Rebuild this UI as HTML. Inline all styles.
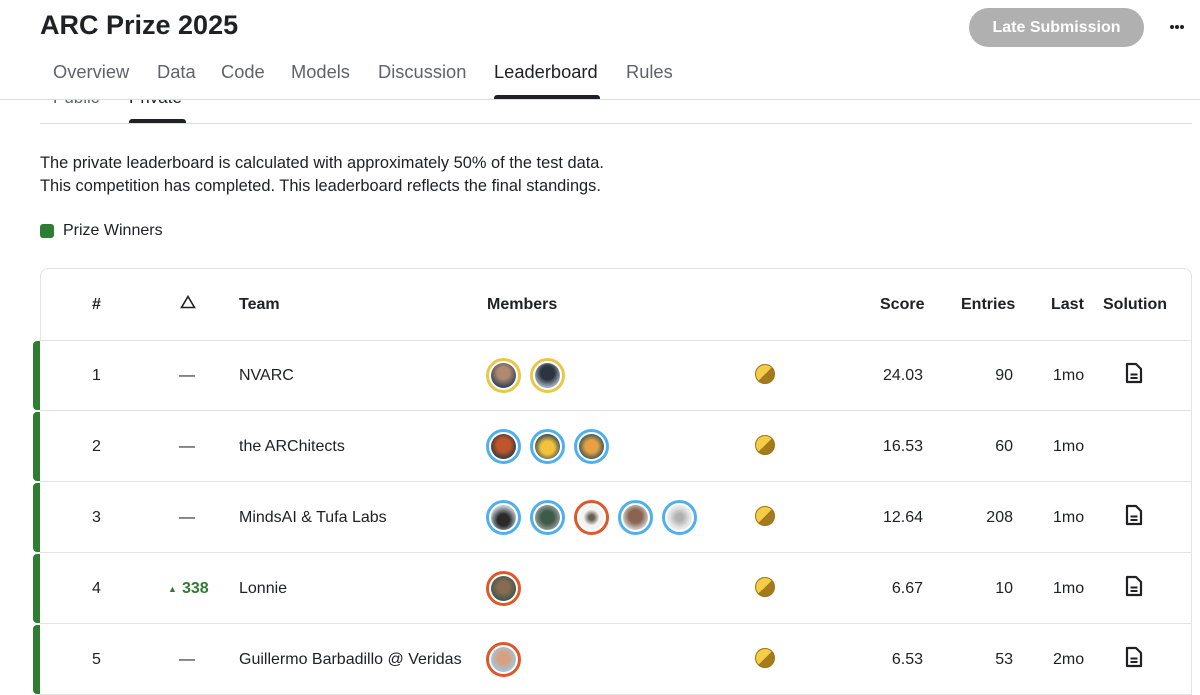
<!DOCTYPE html>
<html><head><meta charset="utf-8"><style>
*{margin:0;padding:0;box-sizing:border-box}
body{width:1200px;height:693px;overflow:hidden;background:#fff;font-family:"Liberation Sans",sans-serif;color:#202124;position:relative}
.a{position:absolute;white-space:nowrap}
.tab{position:absolute;top:61px;font-size:18.3px;color:#5f6368}
.row{position:absolute;left:40px;width:1152px;height:71px;border-bottom:1px solid #e3e3e3;border-right:1px solid #e3e3e3}
.bar{position:absolute;left:33px;width:7px;background:#2e7d32;border-radius:4px 0 0 4px}
.c{position:absolute;top:27px;font-size:16px;color:#202124}
.av{position:absolute;top:18px;width:35px;height:35px;border-radius:50%;border:3px solid #4fb0ee;padding:2px;background:#fff}
.av i{display:block;width:100%;height:100%;border-radius:50%}
.medal{position:absolute;left:715px;top:24px;width:20px;height:20px;border-radius:50%;background:linear-gradient(135deg,#f5cc4a 50%,#a57a1c 50%);border:1.5px solid #9b7414}
.doc{position:absolute;left:1084px;top:22px}
.h{position:absolute;top:296px;font-weight:bold;font-size:16px}
.dot{position:absolute;top:25px;width:4px;height:4px;border-radius:50%;background:#202124}
</style></head><body>
<div class="a" style="left:40px;top:10px;font-size:27px;font-weight:bold;color:#202124">ARC Prize 2025</div>
<div class="a" style="left:969px;top:8px;width:175px;height:39px;border-radius:20px;background:#b0b0b0;color:#fff;font-weight:bold;font-size:16px;text-align:center;line-height:39px">Late Submission</div>
<div class="dot" style="left:1170px"></div><div class="dot" style="left:1175px"></div><div class="dot" style="left:1180px"></div>
<div class="tab" style="left:53px">Overview</div>
<div class="tab" style="left:157px">Data</div>
<div class="tab" style="left:221px">Code</div>
<div class="tab" style="left:291px">Models</div>
<div class="tab" style="left:378px">Discussion</div>
<div class="tab" style="left:494px;color:#202124">Leaderboard</div>
<div class="tab" style="left:626px">Rules</div>
<div class="a" style="left:494px;top:95px;width:106px;height:5px;background:#202124;border-radius:3px 3px 0 0"></div>
<div class="a" style="left:0;top:99px;width:1200px;height:1px;background:#dadce0"></div>
<div class="a" style="left:0;top:100px;width:1200px;height:8px;overflow:hidden">
 <div class="a" style="left:53px;top:-12px;font-size:17px;color:#5f6368">Public</div>
 <div class="a" style="left:129px;top:-12px;font-size:17px;color:#202124">Private</div>
</div>
<div class="a" style="left:129px;top:119px;width:57px;height:5px;background:#202124;border-radius:3px 3px 0 0"></div>
<div class="a" style="left:40px;top:123px;width:1152px;height:1px;background:#dadce0"></div>
<div class="a" style="left:40px;top:152px;font-size:16.4px;line-height:23px;color:#202124">The private leaderboard is calculated with approximately 50% of the test data.<br>This competition has completed. This leaderboard reflects the final standings.</div>
<div class="a" style="left:40px;top:224px;width:14px;height:14px;border-radius:3px;background:#2e7d32"></div>
<div class="a" style="left:63px;top:222px;font-size:16px">Prize Winners</div>

<div class="a" style="left:40px;top:268px;width:1152px;height:73px;border:1px solid #e3e3e3;border-radius:8px 8px 0 0"></div>
<div class="h" style="left:92px">#</div>
<svg class="a" style="left:180px;top:295px" width="16" height="14" viewBox="0 0 16 14"><path d="M8 1.5 L14.5 12.5 H1.5 Z" fill="none" stroke="#202124" stroke-width="1.6"/></svg>
<div class="h" style="left:239px">Team</div>
<div class="h" style="left:487px">Members</div>
<div class="h" style="left:880px">Score</div>
<div class="h" style="left:961px">Entries</div>
<div class="h" style="left:1051px">Last</div>
<div class="h" style="left:1103px">Solution</div>

<div class="bar" style="top:341px;height:69px"></div>
<div class="bar" style="top:412px;height:69px"></div>
<div class="bar" style="top:483px;height:69px"></div>
<div class="bar" style="top:554px;height:69px"></div>
<div class="bar" style="top:625px;height:69px"></div>

<div class="row" style="top:340px">
 <div class="c" style="left:52px">1</div><div class="c" style="left:139px">—</div><div class="c" style="left:199px">NVARC</div>
 <div class="av" style="left:446px;border-color:#e8c84a"><i style="background:radial-gradient(circle at 50% 40%,#b08a70 30%,#3b4a5a 70%)"></i></div>
 <div class="av" style="left:490px;border-color:#e8c84a"><i style="background:radial-gradient(circle at 50% 40%,#2c3440 35%,#9aa8b5 70%)"></i></div>
 <div class="medal"></div>
 <div class="c" style="right:268px">24.03</div><div class="c" style="right:178px">90</div><div class="c" style="left:1013px">1mo</div>
 <svg class="doc" width="20" height="22" viewBox="0 0 20 22"><path d="M3 2h9l5 5v13H3z" fill="none" stroke="#202124" stroke-width="2.2" stroke-linejoin="round"/><path d="M6.5 12.5h7M6.5 16h7" stroke="#202124" stroke-width="2"/></svg>
</div>
<div class="row" style="top:411px">
 <div class="c" style="left:52px">2</div><div class="c" style="left:139px">—</div><div class="c" style="left:199px">the ARChitects</div>
 <div class="av" style="left:446px"><i style="background:radial-gradient(circle at 50% 45%,#c0552a 35%,#2a3a48 75%)"></i></div>
 <div class="av" style="left:490px"><i style="background:radial-gradient(circle at 50% 55%,#f2c23a 35%,#2f4a5a 75%)"></i></div>
 <div class="av" style="left:534px"><i style="background:radial-gradient(circle at 50% 50%,#e8a040 35%,#2e5560 75%)"></i></div>
 <div class="medal"></div>
 <div class="c" style="right:268px">16.53</div><div class="c" style="right:178px">60</div><div class="c" style="left:1013px">1mo</div>
</div>
<div class="row" style="top:482px">
 <div class="c" style="left:52px">3</div><div class="c" style="left:139px">—</div><div class="c" style="left:199px">MindsAI &amp; Tufa Labs</div>
 <div class="av" style="left:446px"><i style="background:radial-gradient(circle at 50% 60%,#2a2a2a 30%,#bfc8d0 70%)"></i></div>
 <div class="av" style="left:490px"><i style="background:radial-gradient(circle at 50% 50%,#3e5a48 35%,#9aa0a0 75%)"></i></div>
 <div class="av" style="left:534px;border-color:#e0582a"><i style="background:radial-gradient(circle at 50% 50%,#6a6050 15%,#f4f4f4 45%)"></i></div>
 <div class="av" style="left:578px"><i style="background:radial-gradient(circle at 50% 45%,#8a6450 35%,#d8d8d8 75%)"></i></div>
 <div class="av" style="left:622px"><i style="background:radial-gradient(circle at 50% 50%,#b0b0b0 20%,#e8e8e8 60%)"></i></div>
 <div class="medal"></div>
 <div class="c" style="right:268px">12.64</div><div class="c" style="right:178px">208</div><div class="c" style="left:1013px">1mo</div>
 <svg class="doc" width="20" height="22" viewBox="0 0 20 22"><path d="M3 2h9l5 5v13H3z" fill="none" stroke="#202124" stroke-width="2.2" stroke-linejoin="round"/><path d="M6.5 12.5h7M6.5 16h7" stroke="#202124" stroke-width="2"/></svg>
</div>
<div class="row" style="top:553px">
 <div class="c" style="left:52px">4</div>
 <div class="c" style="left:128px;font-size:9px;top:31px;color:#2e7d32">▲</div>
 <div class="c" style="left:142px;color:#2e7d32;font-weight:bold">338</div>
 <div class="c" style="left:199px">Lonnie</div>
 <div class="av" style="left:446px;border-color:#e0582a"><i style="background:radial-gradient(circle at 50% 45%,#8a6a50 30%,#3e5a4a 70%)"></i></div>
 <div class="medal"></div>
 <div class="c" style="right:268px">6.67</div><div class="c" style="right:178px">10</div><div class="c" style="left:1013px">1mo</div>
 <svg class="doc" width="20" height="22" viewBox="0 0 20 22"><path d="M3 2h9l5 5v13H3z" fill="none" stroke="#202124" stroke-width="2.2" stroke-linejoin="round"/><path d="M6.5 12.5h7M6.5 16h7" stroke="#202124" stroke-width="2"/></svg>
</div>
<div class="row" style="top:624px">
 <div class="c" style="left:52px">5</div><div class="c" style="left:139px">—</div><div class="c" style="left:199px">Guillermo Barbadillo @ Veridas</div>
 <div class="av" style="left:446px;border-color:#e0582a"><i style="background:radial-gradient(circle at 50% 45%,#d8a080 30%,#9cc8e0 70%)"></i></div>
 <div class="medal"></div>
 <div class="c" style="right:268px">6.53</div><div class="c" style="right:178px">53</div><div class="c" style="left:1013px">2mo</div>
 <svg class="doc" width="20" height="22" viewBox="0 0 20 22"><path d="M3 2h9l5 5v13H3z" fill="none" stroke="#202124" stroke-width="2.2" stroke-linejoin="round"/><path d="M6.5 12.5h7M6.5 16h7" stroke="#202124" stroke-width="2"/></svg>
</div>
</body></html>
